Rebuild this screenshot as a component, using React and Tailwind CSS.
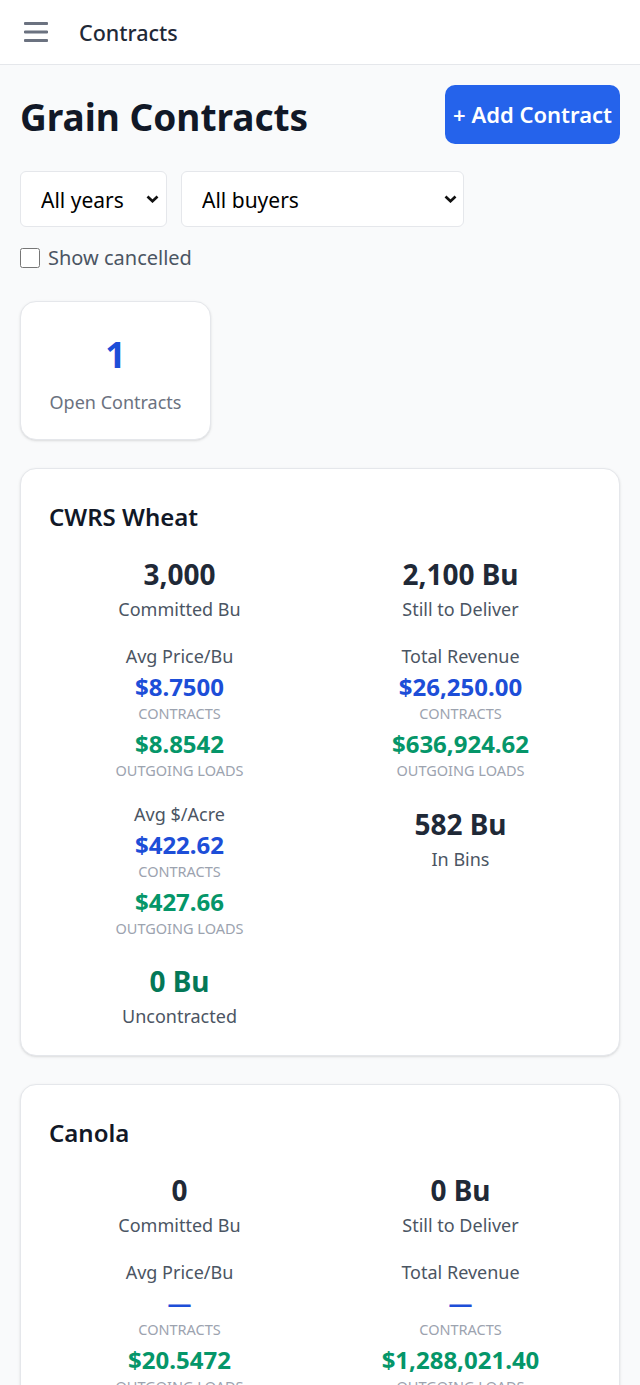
import React, { useState } from "react";

const font = { fontFamily: '"Noto Sans", "Open Sans", sans-serif' };

const Chevron = () => (
  <svg
    width="13"
    height="8"
    viewBox="0 0 13 8"
    className="absolute right-0 top-1/2 -translate-y-1/2 pointer-events-none"
  >
    <path d="M1.5 1.5L6.5 6.2l5-4.7" fill="none" stroke="#111" strokeWidth="2.7" />
  </svg>
);

const Split = ({ label, contracts, loads }) => (
  <div className="flex flex-col items-center">
    <div className="text-[18px] leading-[26px] text-[#4b5563]">{label}</div>
    <div className="mt-[2px] text-[24px] leading-[32px] font-bold text-[#1d4ed8]">{contracts}</div>
    <div className="text-[14.5px] leading-[20px] uppercase text-[#9ca3af]">Contracts</div>
    <div className="mt-[5px] text-[24px] leading-[32px] font-bold text-[#059669]">{loads}</div>
    <div className="text-[14.5px] leading-[20px] uppercase text-[#9ca3af]">Outgoing Loads</div>
  </div>
);

const Stat = ({ value, label, color = "text-[#1f2937]", className = "" }) => (
  <div className={"flex flex-col items-center " + className}>
    <div className={"text-[28px] leading-[40px] font-bold " + color}>{value}</div>
    <div className="mt-[2px] text-[18px] leading-[26px] text-[#4b5563]">{label}</div>
  </div>
);

const GrainCard = ({ g }) => (
  <div className="bg-white border border-[#e5e7eb] rounded-2xl shadow-sm px-[28px] pt-[32px] pb-[26px]">
    <h2 className="text-[24px] leading-[32px] font-semibold text-[#111827]">{g.name}</h2>
    <div className="mt-[21px] grid grid-cols-2 gap-x-5 gap-y-[21px]">
      <Stat value={g.committed} label="Committed Bu" />
      <Stat value={g.remaining} label="Still to Deliver" />
      <Split label="Avg Price/Bu" contracts={g.avgPrice} loads={g.avgPriceLoads} />
      <Split label="Total Revenue" contracts={g.revenue} loads={g.revenueLoads} />
      <Split label="Avg $/Acre" contracts={g.acre} loads={g.acreLoads} />
      <Stat value={g.bins} label="In Bins" className="mt-[3px]" />
      <Stat value={g.uncontracted} label="Uncontracted" color="text-[#047857]" className="mt-[2px]" />
    </div>
  </div>
);

const grains = [
  {
    name: "CWRS Wheat",
    committed: "3,000",
    remaining: "2,100 Bu",
    avgPrice: "$8.7500",
    avgPriceLoads: "$8.8542",
    revenue: "$26,250.00",
    revenueLoads: "$636,924.62",
    acre: "$422.62",
    acreLoads: "$427.66",
    bins: "582 Bu",
    uncontracted: "0 Bu",
  },
  {
    name: "Canola",
    committed: "0",
    remaining: "0 Bu",
    avgPrice: "—",
    avgPriceLoads: "$20.5472",
    revenue: "—",
    revenueLoads: "$1,288,021.40",
    acre: "—",
    acreLoads: "$512.30",
    bins: "0 Bu",
    uncontracted: "0 Bu",
  },
];

export default function App() {
  const [showCancelled, setShowCancelled] = useState(false);

  return (
    <div className="min-h-screen bg-[#f9fafb]" style={font}>
      {/* top bar */}
      <header className="h-[65px] bg-white border-b border-[#e5e7eb] flex items-center px-6">
        <svg width="24" height="24" viewBox="0 0 24 24" className="text-[#6b7280]">
          <path d="M1 3.5h22M1 12h22M1 20.5h22" stroke="currentColor" strokeWidth="2.8" strokeLinecap="round" />
        </svg>
        <span className="ml-[31px] mt-[2px] text-[21.5px] font-medium text-[#1f2937]">Contracts</span>
      </header>

      <main className="px-5 pt-5">
        <div className="flex items-center justify-between">
          <h1 className="mt-[3px] text-[37px] font-bold text-[#111827] leading-none">Grain Contracts</h1>
          <button className="h-[59px] px-2 rounded-[10px] bg-[#2563eb] text-white text-[22px] font-semibold">
            + Add Contract
          </button>
        </div>

        <div className="mt-[27px] flex gap-[14px]">
          <div className="relative w-[147px]">
            <select className="appearance-none h-[56px] w-full pl-[20px] pr-6 pt-[3px] bg-white border border-[#e5e7eb] rounded-md text-[21px] text-black">
              <option>All years</option>
            </select>
            <span className="absolute right-[8px] top-0 h-full w-[13px]">
              <Chevron />
            </span>
          </div>
          <div className="relative w-[283px]">
            <select className="appearance-none h-[56px] w-full pl-[20px] pr-6 pt-[3px] bg-white border border-[#e5e7eb] rounded-md text-[21px] text-black">
              <option>All buyers</option>
            </select>
            <span className="absolute right-[7px] top-0 h-full w-[13px]">
              <Chevron />
            </span>
          </div>
        </div>

        <label className="mt-[16px] flex items-center gap-2 text-[20px] text-[#4b5563]">
          <input
            type="checkbox"
            checked={showCancelled}
            onChange={(e) => setShowCancelled(e.target.checked)}
            className="w-5 h-5 m-0"
          />
          Show cancelled
        </label>

        <div className="mt-[28px] w-[191px] h-[139px] pt-[8px] bg-white border border-[#e5e7eb] rounded-2xl shadow-sm flex flex-col items-center justify-center">
          <div className="text-[36px] leading-[44px] font-bold text-[#1d4ed8]">1</div>
          <div className="mt-[12px] text-[18px] text-[#6b7280]">Open Contracts</div>
        </div>

        <div className="mt-[28px] flex flex-col gap-[28px] pb-8">
          {grains.map((g) => (
            <GrainCard key={g.name} g={g} />
          ))}
        </div>
      </main>
    </div>
  );
}
